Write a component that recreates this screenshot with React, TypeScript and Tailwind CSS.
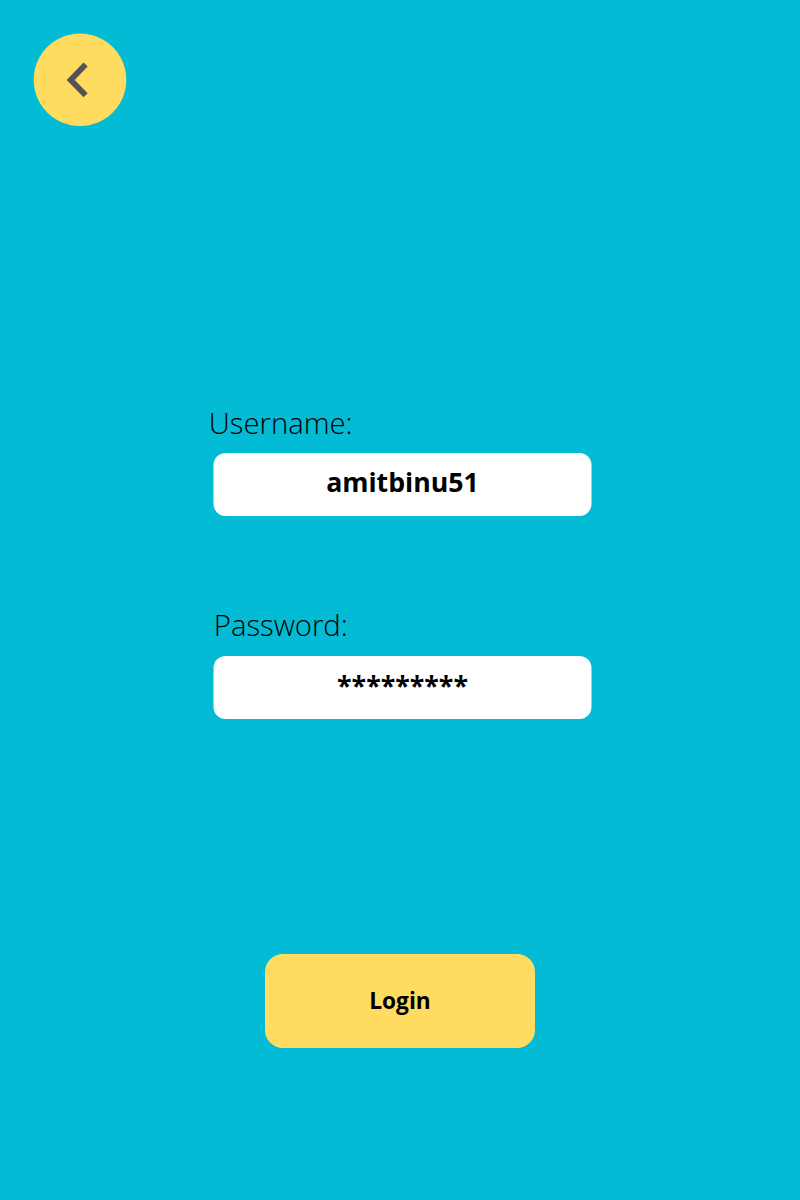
export default function App() {
  return (
    <main className="flex h-[1200px] w-full flex-col bg-[#03bbd4] pt-[33px] font-['Open_Sans',sans-serif] text-black">
      <button aria-label="Back" className="ml-[33px] h-[94px] w-[94px] rounded-full">
        <svg viewBox="0 0 94 94" className="h-[94px] w-[94px]">
          <circle cx="47" cy="46.8" r="46.3" fill="#ffdc60" />
          <path d="M52.6 31.5 L37.7 46.9 L52.6 62.3" fill="none" stroke="#545454" strokeWidth="5.8" />
        </svg>
      </button>
      <form className="flex flex-col items-center">
        <div className="mt-[275px] w-[377.4px] translate-x-[2.5px]">
          <div className="-ml-[5px] h-[51px] text-[29.25px] leading-[42px] font-light">Username:</div>
          <div className="h-[63px] rounded-[12px] bg-white text-center text-[26.7px] leading-[58px] font-bold">amitbinu51</div>
        </div>
        <div className="mt-[88px] w-[377.4px] translate-x-[2.5px]">
          <div className="h-[52px] text-[29.25px] leading-[42px] font-light">Password:</div>
          <div className="h-[63px] rounded-[12px] bg-white text-center text-[26.7px] leading-[58px] font-bold">*********</div>
        </div>
        <button type="button" className="mt-[235px] h-[94px] w-[270px] rounded-[18px] bg-[#ffdc60] text-[22.7px] font-bold">Login</button>
      </form>
    </main>
  );
}
